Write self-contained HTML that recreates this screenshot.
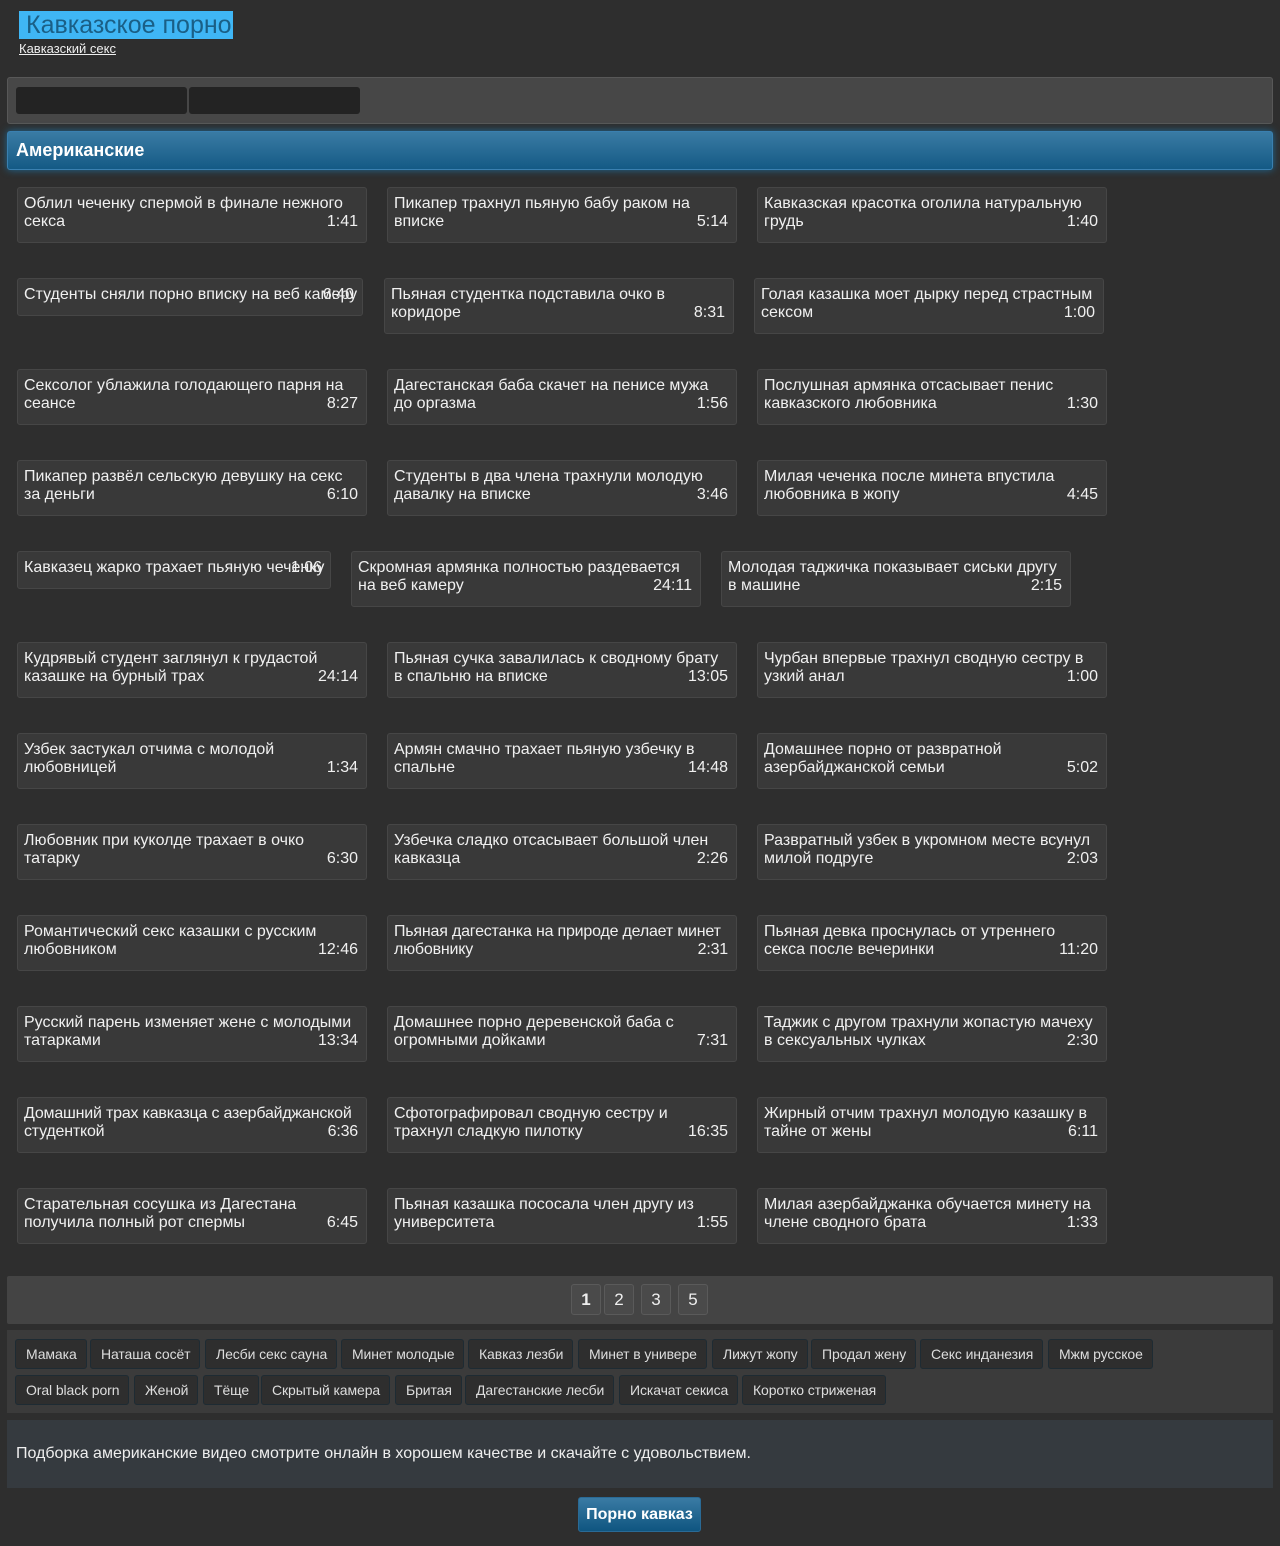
<!DOCTYPE html>
<html><head><meta charset="utf-8"><style>
*{box-sizing:border-box;margin:0;padding:0}
body{width:1280px;height:1546px;background:#2e2e2e;font-family:"Liberation Sans",Arial,sans-serif;color:#eee;position:relative;overflow:hidden}
.logo{position:absolute;left:19px;top:11px;background:#3fb6f5;color:#1a5f86;font-size:25px;line-height:28px;padding:0 1px 0 7px}
.sub{position:absolute;left:19px;top:41px;font-size:13px;color:#eee;text-decoration:underline}
.nav{position:absolute;left:7px;top:77px;width:1266px;height:47px;background:#474747;border:1px solid #585858;border-radius:3px}
.nav i{position:absolute;top:9px;width:171px;height:27px;background:#232323;border-radius:3px}
.hd{position:absolute;left:7px;top:131px;width:1266px;height:39px;border-radius:3px;background:linear-gradient(#3a7ba4,#145a85);border:1px solid #3a80b0;box-shadow:0 0 8px #1f6a96;font-weight:bold;font-size:18px;line-height:37px;padding-left:8px;color:#fff}
.c{position:absolute;width:350px;height:56px;background:#393939;border:1px solid #464646;border-radius:3px;padding:7px 6px;font-size:16px;line-height:18px;color:#f0f0f0}
.c.s{height:38px;white-space:nowrap}
.c b{font-weight:normal;position:absolute;right:8px;bottom:11px}
.c.s b{bottom:11px}
.pg{position:absolute;left:7px;top:1276px;width:1266px;height:48px;background:#444;border-radius:2px}
.pg span{position:absolute;top:8px;width:30px;height:31px;border:1px solid #5a5a5a;border-radius:3px;background:#4a4a4a;text-align:center;line-height:29px;font-size:17px}
.tg{position:absolute;left:7px;top:1330px;width:1266px;height:83px;background:#3b3b3b}
.tg span{position:absolute;height:30px;border:1px solid #1e2b33;border-radius:3px;background:#2e2e2e;font-size:14px;line-height:28px;padding:0 9px 0 10px;color:#ddd;letter-spacing:-0.1px}
.ds{position:absolute;left:7px;top:1420px;width:1266px;height:68px;background:#353a3f;font-size:16px;line-height:68px;padding-left:9px;color:#eee}
.bt{position:absolute;left:578px;top:1497px;width:123px;height:35px;border-radius:3px;background:linear-gradient(#3a7ba4,#0f5580);border:1px solid #2a6a95;font-weight:bold;font-size:16px;line-height:33px;text-align:center;color:#fff}
</style></head><body>
<div class="logo">Кавказское порно</div>
<div class="sub">Кавказский секс</div>
<div class="nav"><i style="left:8px"></i><i style="left:181px"></i></div>
<div class="hd">Американские</div>

<div class="c" style="left:17px;top:187px">Облил чеченку спермой в финале нежного секса<b>1:41</b></div>
<div class="c" style="left:387px;top:187px">Пикапер трахнул пьяную бабу раком на вписке<b>5:14</b></div>
<div class="c" style="left:757px;top:187px">Кавказская красотка оголила натуральную грудь<b>1:40</b></div>

<div class="c s" style="left:17px;top:278px;width:346px">Студенты сняли порно вписку на веб камеру<b>6:40</b></div>
<div class="c" style="left:384px;top:278px">Пьяная студентка подставила очко в коридоре<b>8:31</b></div>
<div class="c" style="left:754px;top:278px">Голая казашка моет дырку перед страстным сексом<b>1:00</b></div>

<div class="c" style="left:17px;top:369px">Сексолог ублажила голодающего парня на сеансе<b>8:27</b></div>
<div class="c" style="left:387px;top:369px">Дагестанская баба скачет на пенисе мужа до оргазма<b>1:56</b></div>
<div class="c" style="left:757px;top:369px">Послушная армянка отсасывает пенис кавказского любовника<b>1:30</b></div>

<div class="c" style="left:17px;top:460px">Пикапер развёл сельскую девушку на секс за деньги<b>6:10</b></div>
<div class="c" style="left:387px;top:460px">Студенты в два члена трахнули молодую давалку на вписке<b>3:46</b></div>
<div class="c" style="left:757px;top:460px">Милая чеченка после минета впустила любовника в жопу<b>4:45</b></div>

<div class="c s" style="left:17px;top:551px;width:314px">Кавказец жарко трахает пьяную чеченку<b>1:06</b></div>
<div class="c" style="left:351px;top:551px">Скромная армянка полностью раздевается на веб камеру<b>24:11</b></div>
<div class="c" style="left:721px;top:551px">Молодая таджичка показывает сиськи другу в машине<b>2:15</b></div>

<div class="c" style="left:17px;top:642px">Кудрявый студент заглянул к грудастой казашке на бурный трах<b>24:14</b></div>
<div class="c" style="left:387px;top:642px">Пьяная сучка завалилась к сводному брату в спальню на вписке<b>13:05</b></div>
<div class="c" style="left:757px;top:642px">Чурбан впервые трахнул сводную сестру в узкий анал<b>1:00</b></div>

<div class="c" style="left:17px;top:733px">Узбек застукал отчима с молодой любовницей<b>1:34</b></div>
<div class="c" style="left:387px;top:733px">Армян смачно трахает пьяную узбечку в спальне<b>14:48</b></div>
<div class="c" style="left:757px;top:733px">Домашнее порно от развратной азербайджанской семьи<b>5:02</b></div>

<div class="c" style="left:17px;top:824px">Любовник при куколде трахает в очко татарку<b>6:30</b></div>
<div class="c" style="left:387px;top:824px">Узбечка сладко отсасывает большой член кавказца<b>2:26</b></div>
<div class="c" style="left:757px;top:824px">Развратный узбек в укромном месте всунул милой подруге<b>2:03</b></div>

<div class="c" style="left:17px;top:915px">Романтический секс казашки с русским любовником<b>12:46</b></div>
<div class="c" style="left:387px;top:915px;letter-spacing:-0.2px">Пьяная дагестанка на природе делает минет любовнику<b>2:31</b></div>
<div class="c" style="left:757px;top:915px">Пьяная девка проснулась от утреннего секса после вечеринки<b>11:20</b></div>

<div class="c" style="left:17px;top:1006px">Русский парень изменяет жене с молодыми татарками<b>13:34</b></div>
<div class="c" style="left:387px;top:1006px">Домашнее порно деревенской баба с огромными дойками<b>7:31</b></div>
<div class="c" style="left:757px;top:1006px">Таджик с другом трахнули жопастую мачеху в сексуальных чулках<b>2:30</b></div>

<div class="c" style="left:17px;top:1097px;letter-spacing:-0.2px">Домашний трах кавказца с азербайджанской студенткой<b>6:36</b></div>
<div class="c" style="left:387px;top:1097px">Сфотографировал сводную сестру и трахнул сладкую пилотку<b>16:35</b></div>
<div class="c" style="left:757px;top:1097px">Жирный отчим трахнул молодую казашку в тайне от жены<b>6:11</b></div>

<div class="c" style="left:17px;top:1188px">Старательная сосушка из Дагестана получила полный рот спермы<b>6:45</b></div>
<div class="c" style="left:387px;top:1188px">Пьяная казашка пососала член другу из университета<b>1:55</b></div>
<div class="c" style="left:757px;top:1188px">Милая азербайджанка обучается минету на члене сводного брата<b>1:33</b></div>

<div class="pg"><span style="left:564px;font-weight:bold">1</span><span style="left:597px">2</span><span style="left:634px">3</span><span style="left:671px">5</span></div>
<div class="tg">
<span style="left:8px;top:9px">Мамака</span><span style="left:83px;top:9px">Наташа сосёт</span><span style="left:198px;top:9px">Лесби секс сауна</span><span style="left:334px;top:9px">Минет молодые</span><span style="left:461px;top:9px">Кавказ лезби</span><span style="left:571px;top:9px">Минет в универе</span><span style="left:705px;top:9px">Лижут жопу</span><span style="left:804px;top:9px">Продал жену</span><span style="left:913px;top:9px">Секс инданезия</span><span style="left:1041px;top:9px">Мжм русское</span>
<span style="left:8px;top:45px">Oral black porn</span><span style="left:127px;top:45px">Женой</span><span style="left:196px;top:45px">Тёще</span><span style="left:254px;top:45px">Скрытый камера</span><span style="left:388px;top:45px">Бритая</span><span style="left:458px;top:45px">Дагестанские лесби</span><span style="left:612px;top:45px">Искачат секиса</span><span style="left:735px;top:45px">Коротко стриженая</span>
</div>
<div class="ds">Подборка американские видео смотрите онлайн в хорошем качестве и скачайте с удовольствием.</div>
<div class="bt">Порно кавказ</div>
</body></html>
